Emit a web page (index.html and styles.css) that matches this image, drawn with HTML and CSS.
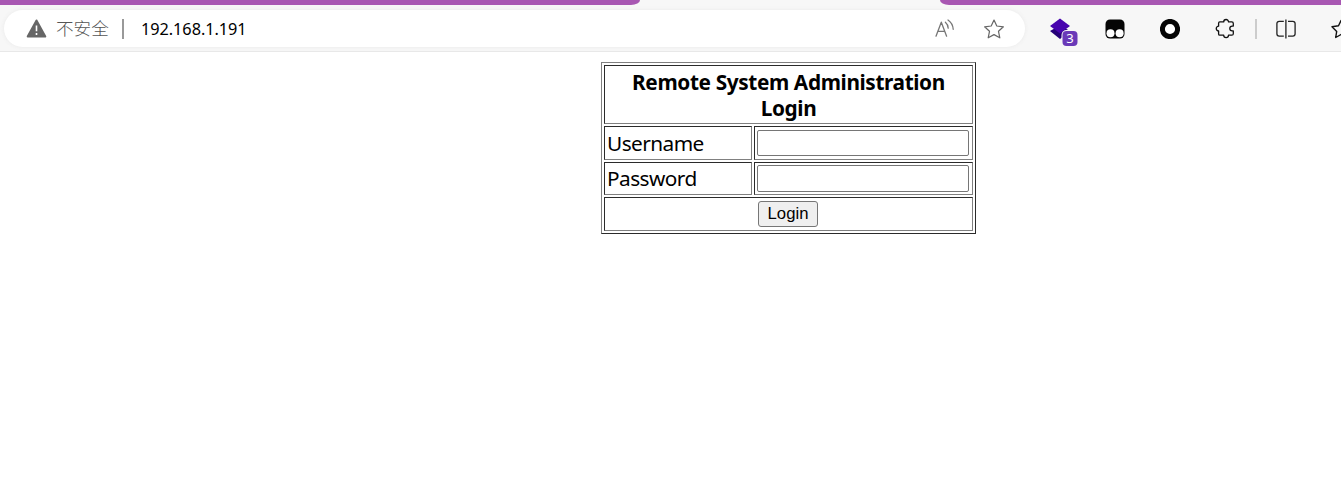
FILE: index.html
```html
<!DOCTYPE html>
<html lang="zh-CN">
<head>
<meta charset="utf-8">
<title>192.168.1.191</title>
<link rel="stylesheet" href="styles.css">
</head>
<body>
<div class="tabs"><div class="tab-left"></div><div class="tab-right"></div></div>
<header class="toolbar">
  <div class="address">
    <svg class="warn" width="22" height="20" viewBox="0 0 22 20"><path d="M11.5 1.5 20.3 17.6H2.7Z" fill="#666" stroke="#666" stroke-width="2" stroke-linejoin="round"/><path d="M11.5 6.5v5.8M11.5 14v2" stroke="#fff" stroke-width="1.6"/></svg>
    <span class="security">不安全</span>
    <span class="divider"></span>
    <span class="url">192.168.1.191</span>
    <svg class="read" width="22" height="22" viewBox="0 0 22 22" fill="none" stroke="#777" stroke-width="1.3" stroke-linecap="round" stroke-linejoin="round"><path d="M2 18.2 7.3 4.2 12.6 18.2M4 13.3h6.7M11.4 4.2q2.6 2.2 2.8 6M14 2q4.8 3.2 5.2 9.3"/></svg>
    <svg class="star" width="22" height="22" viewBox="0 0 22 22" fill="none" stroke="#666" stroke-width="1.2" stroke-linejoin="round"><path d="m11 2 2.8 6 6.6.8-4.9 4.5 1.3 6.5L11 16.6l-5.8 3.2 1.3-6.5L1.6 8.8 8.2 8Z"/></svg>
  </div>
  <div class="extensions">
    <svg class="layers" width="32" height="32" viewBox="0 0 32 32"><path d="m2 16 10-5.5L22 16 12 24Z" fill="#250078"/><path d="m12 3.5 10 7.5-10 7.5L2 11Z" fill="#4703ae"/><rect x="13.5" y="15" width="17" height="17" rx="5" fill="#f7f7f7"/><rect x="14.5" y="16" width="15" height="15" rx="4" fill="#6a39b8"/><text class="count" x="22" y="28.3" text-anchor="middle" fill="#fff">3</text></svg>
    <svg class="monkey" width="20" height="20" viewBox="0 0 20 20"><rect x=".5" y=".5" width="19" height="19" rx="4.5" fill="#050505"/><circle cx="5.5" cy="14.3" r="4" fill="#fff"/><circle cx="14.6" cy="14.3" r="4" fill="#fff"/></svg>
    <svg class="ring" width="20" height="20" viewBox="0 0 20 20"><circle cx="10" cy="10" r="7.6" fill="#fff" stroke="#050505" stroke-width="5"/></svg>
    <svg class="puzzle" width="20" height="22" viewBox="0 0 20 22" fill="none" stroke="#111" stroke-width="1.3" stroke-linejoin="round"><path d="M4.8 3.9H8.7a2.4 2.4 0 0 1 4.8 0h3.3q1.5 0 1.5 1.5v2.7h-1.1a2.4 2.4 0 0 0 0 4.8h1.1v2.8q0 1.5-1.5 1.5h-3.3a2.4 2.4 0 0 1-4.8 0H4.8q-1.2 0-1.2-1.3v-3a2.3 2.3 0 0 1 0-4.7V5.2q0-1.3 1.2-1.3Z"/></svg>
    <span class="separator"></span>
    <svg class="split" width="20" height="20" viewBox="0 0 20 20" fill="none" stroke="#222" stroke-width="1.3"><path d="M7.8 2.3H3.2q-2.3 0-2.3 2.3v10.2q0 2.3 2.3 2.3h4.6M12 2.3h4.8q2.3 0 2.3 2.3v10.2q0 2.3-2.3 2.3H12M9.9.5v19"/></svg>
    <svg class="favorites" width="22" height="22" viewBox="0 0 22 22" fill="none" stroke="#111" stroke-width="1.4" stroke-linejoin="round"><path d="m10 2.5 2.5 5.3 7 .8-5 4.5.5 6-5-2.6-5.3 3 1-6.1L1 8.8l6.5-1Z"/></svg>
  </div>
</header>
<main class="page">
  <form class="login">
    <div class="cell title"><span class="line1">Remote System Administration</span><span class="line2">Login</span></div>
    <label class="cell label user" for="u">Username</label>
    <div class="cell field"><input class="input short" id="u" type="text"></div>
    <label class="cell label pass" for="p">Password</label>
    <div class="cell field second"><input class="input" id="p" type="password"></div>
    <div class="cell action"><button class="button" type="button">Login</button></div>
  </form>
</main>
</body>
</html>
```
FILE: styles.css
```css
* { box-sizing: border-box; }
body { margin: 0; width: 1341px; height: 485px; overflow: hidden; background: #fff; font-family: "Noto Sans", "Noto Sans CJK SC", sans-serif; color: #000; }
svg { display: block; flex: none; }
.tabs { display: flex; justify-content: space-between; height: 5px; background: #f7f7f7; }
.tab-left { width: 640px; background: #a857b2; border-bottom-right-radius: 9px 5px; }
.tab-right { width: 401px; background: #a857b2; border-bottom-left-radius: 9px 5px; }
.toolbar { display: flex; height: 47px; padding: 5px 0 0 4px; background: #f7f7f7; border-bottom: 1px solid #e8e8e8; }
.address { display: flex; align-items: center; flex: none; width: 1021px; height: 37px; padding-left: 21px; border-radius: 19px; background: #fff; box-shadow: 0 0 4px #e9e9e9; }
.security { width: 56px; margin-left: 9px; padding-bottom: 2px; font: 300 17.6px/24px "Noto Sans CJK SC", sans-serif; color: #555; white-space: nowrap; }
.divider { width: 2px; height: 20px; margin-left: 10px; background: #999; }
.url { width: 110px; margin-left: 17px; font-size: 16.3px; letter-spacing: -0.05px; line-height: 24px; white-space: nowrap; }
.read { margin-left: 683px; }
.star { margin-left: 27px; }
.extensions { display: flex; align-items: flex-start; flex: none; width: 316px; overflow: hidden; padding-left: 23px; }
.layers { margin-top: 5px; }
.count { font: 13px "Noto Sans", sans-serif; }
.monkey { margin: 9px 0 0 25px; }
.ring { margin: 9px 0 0 35px; }
.puzzle { margin: 8px 0 0 35px; }
.separator { flex: none; width: 2px; height: 20px; margin: 9px 0 0 20px; background: #ccc; }
.split { margin: 9px 0 0 19px; }
.favorites { margin: 8px 0 0 35px; }
.page { display: flex; padding: 10px 0 0 601px; }
.login { display: grid; grid-template-columns: 148px 219px; grid-template-rows: 59px 34px 33px 34px; gap: 2px; width: 375px; height: 172px; padding: 2px; border: 1px solid; border-color: #808080 #2b2b2b #2b2b2b #808080; }
.cell { border: 1px solid; border-color: #2b2b2b #808080 #808080 #2b2b2b; overflow: hidden; }
.title { display: flex; flex-direction: column; align-items: center; grid-column: 1 / 3; padding-top: 3px; font-size: 20.8px; font-weight: 700; letter-spacing: -0.38px; line-height: 26px; white-space: nowrap; }
.label { padding-left: 2px; font-size: 20.8px; letter-spacing: -0.55px; line-height: 33px; }
.pass { line-height: 31px; }
.field { padding: 3px 0 0 2px; }
.second { padding-top: 2px; }
.input { display: block; width: 212px; height: 27px; padding: 1px 2px; border: 1px solid #767676; border-radius: 2px; background: #fff; outline: 0; }
.short { height: 26px; }
.action { display: flex; justify-content: center; grid-column: 1 / 3; padding: 3px 1px 0 0; }
.button { width: 60px; height: 26px; padding: 0; border: 1px solid #767676; border-radius: 3px; background: #efefef; color: #000; font: 16.7px/22px "Liberation Sans", Arial, sans-serif; }
```
